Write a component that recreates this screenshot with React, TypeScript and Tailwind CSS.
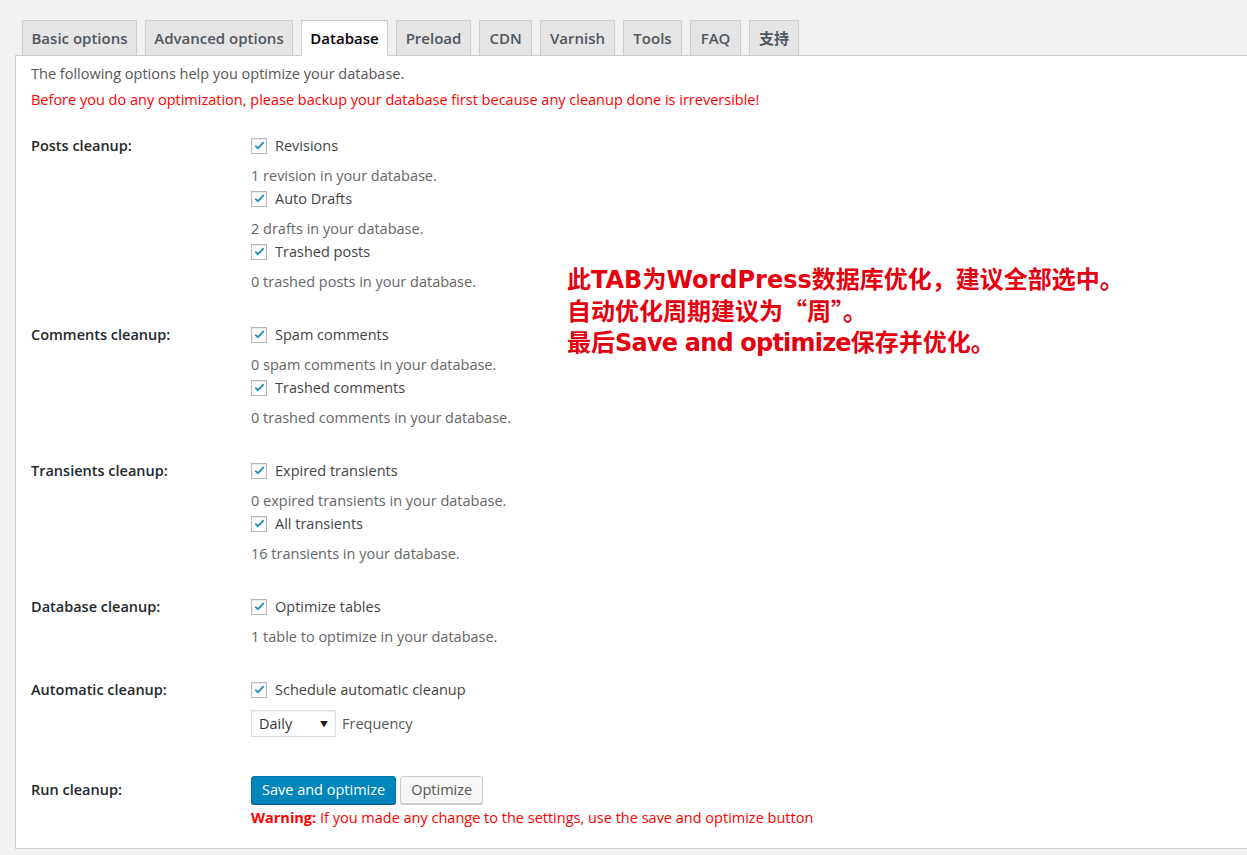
import React from 'react';

interface CleanupItem {
  label: string;
  note: string;
}

interface CleanupRow {
  title: string;
  items: CleanupItem[];
}

const tabs = [
  { name: 'Basic options', w: 'w-[115px]' },
  { name: 'Advanced options', w: 'w-[148px]' },
  { name: 'Database', w: 'w-[87px]', active: true },
  { name: 'Preload', w: 'w-[75px]' },
  { name: 'CDN', w: 'w-[53px]' },
  { name: 'Varnish', w: 'w-[75px]' },
  { name: 'Tools', w: 'w-[59px]' },
  { name: 'FAQ', w: 'w-[51px]' },
  { name: '支持', w: 'w-[50px]' },
];

const rows: CleanupRow[] = [
  {
    title: 'Posts cleanup:',
    items: [
      { label: 'Revisions', note: '1 revision in your database.' },
      { label: 'Auto Drafts', note: '2 drafts in your database.' },
      { label: 'Trashed posts', note: '0 trashed posts in your database.' },
    ],
  },
  {
    title: 'Comments cleanup:',
    items: [
      { label: 'Spam comments', note: '0 spam comments in your database.' },
      { label: 'Trashed comments', note: '0 trashed comments in your database.' },
    ],
  },
  {
    title: 'Transients cleanup:',
    items: [
      { label: 'Expired transients', note: '0 expired transients in your database.' },
      { label: 'All transients', note: '16 transients in your database.' },
    ],
  },
  {
    title: 'Database cleanup:',
    items: [{ label: 'Optimize tables', note: '1 table to optimize in your database.' }],
  },
];

const Checkbox = ({ label }: { label: string }) => (
  <label className="flex items-center gap-2 h-[23px] text-[#444]">
    <span className="flex items-center justify-center w-4 h-4 bg-white border border-[#b4b9be] shadow-[inset_0_1px_2px_rgba(0,0,0,0.1)]">
      <svg viewBox="0 0 16 16" className="w-[13px] h-[13px]">
        <path d="M2.8 8.2l3.2 3.1 7.2-7.4" fill="none" stroke="#1e8cbe" strokeWidth="2.2" />
      </svg>
    </span>
    {label}
  </label>
);

const Row = ({ title, children }: { title: string; children: React.ReactNode }) => (
  <div className="flex py-[15px]">
    <div className="w-[220px] shrink-0 leading-[23px] font-semibold text-[#23282d]">{title}</div>
    <div className="flex flex-col">{children}</div>
  </div>
);

const Latin = ({ children, tight }: { children: React.ReactNode; tight?: boolean }) => (
  <span
    className={`whitespace-pre ${tight ? 'tracking-[-0.8px]' : ''}`}
    style={{ fontFamily: '"DejaVu Sans", sans-serif' }}
  >
    {children}
  </span>
);

// the red note pasted over the screenshot
const Note = ({ children }: { children: React.ReactNode }) => (
  <p className="flex items-baseline h-[31.5px] leading-[31px] whitespace-nowrap">{children}</p>
);

export default function App() {
  return (
    <div
      className="relative min-h-[855px] bg-[#f1f1f1] pt-[20px] text-[14.5px] overflow-hidden"
      style={{ fontFamily: '"Open Sans", "Noto Sans CJK SC", sans-serif' }}
    >
      <div className="flex gap-2 pl-[22px] relative z-10">
        {tabs.map((t) => (
          <div
            key={t.name}
            className={`${t.w} h-[36px] flex items-center justify-center border border-[#ccc] font-semibold text-[15px] ${
              t.active ? 'bg-white text-black border-b-white' : 'bg-[#e5e5e5] text-[#50575e]'
            }`}
          >
            {t.name}
          </div>
        ))}
      </div>

      <div className="ml-[15px] -mt-px bg-white border-l border-t border-b border-[#ccc] pl-[15px] pt-[6px] pb-[4px]">
        <p className="leading-[23px] text-[#555]">The following options help you optimize your database.</p>
        <p className="leading-[23px] mt-[3px] text-[#f00]">
          Before you do any optimization, please backup your database first because any cleanup done is irreversible!
        </p>

        <div className="mt-[8px]">
          {rows.map((r) => (
            <Row key={r.title} title={r.title}>
              {r.items.map((it) => (
                <div key={it.label}>
                  <Checkbox label={it.label} />
                  <p className="mt-[7px] leading-[23px] text-[#666]">{it.note}</p>
                </div>
              ))}
            </Row>
          ))}

          <Row title="Automatic cleanup:">
            <Checkbox label="Schedule automatic cleanup" />
            <div className="flex items-center gap-[6px] mt-[9px] mb-[11px]">
              <div className="w-[85px] h-[27px] border border-[#ddd] bg-white flex items-center justify-between pl-[7px] pr-[7px] text-[#333] shadow-[inset_0_1px_2px_rgba(0,0,0,0.07)]">
                <span>Daily</span>
                <span className="text-[8px] text-[#222]">▼</span>
              </div>
              <span className="text-[#555]">Frequency</span>
            </div>
          </Row>

          <Row title="Run cleanup:">
            <div className="flex gap-[4px] mt-[-2px]">
              <button className="h-[28px] px-[10px] bg-[#0085ba] border border-[#0073aa] rounded-[3px] text-white shadow-[0_1px_0_#006799]">
                Save and optimize
              </button>
              <button className="h-[28px] px-[10px] bg-[#f7f7f7] border border-[#ccc] rounded-[3px] text-[#555] shadow-[0_1px_0_#ccc]">
                Optimize
              </button>
            </div>
            <p className="leading-[23px] mt-[2px] text-[#f00]">
              <span className="font-bold">Warning:</span> If you made any change to the settings, use the save and optimize button
            </p>
          </Row>
        </div>
      </div>

      <div
        className="absolute left-[567px] top-[262px] text-[24px] font-bold text-[#e5000f]"
        style={{ fontFamily: '"Noto Sans CJK SC", sans-serif' }}
      >
        <Note>
          此<Latin>TAB</Latin>为<Latin>WordPress</Latin>数据库优化，建议全部选中。
        </Note>
        <Note>自动优化周期建议为“周”。</Note>
        <Note>
          最后<Latin tight>Save and optimize</Latin>保存并优化。
        </Note>
      </div>
    </div>
  );
}
